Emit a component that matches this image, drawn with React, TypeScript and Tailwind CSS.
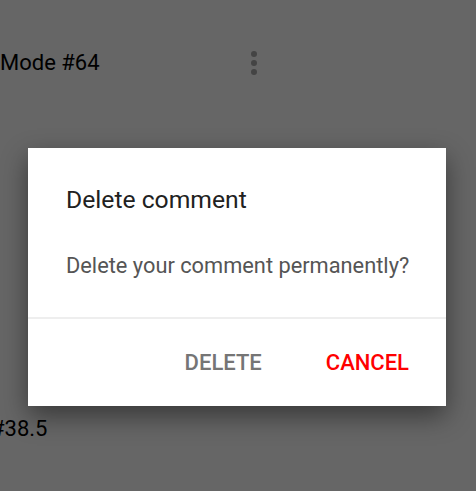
export default function App() {
  return (
    <div className="relative w-[476px] h-[491px] bg-[#666666] overflow-hidden" style={{ fontFamily: "Roboto, sans-serif" }}>
      <div className="flex items-center justify-between w-[270px] h-[40px] mt-[43px]">
        <span className="text-[22px] text-black leading-none">Mode #64</span>
        <div className="flex flex-col gap-[3px] mr-[13px]">
          <span className="block w-[6px] h-[6px] rounded-full bg-[#444444]" />
          <span className="block w-[6px] h-[6px] rounded-full bg-[#444444]" />
          <span className="block w-[6px] h-[6px] rounded-full bg-[#444444]" />
        </div>
      </div>
      <div className="absolute left-[-9px] top-[418px] text-[22px] text-black leading-none">#38.5</div>
      <div className="absolute left-[28px] top-[148px] w-[418px] h-[258px] bg-white shadow-[0_10px_25px_rgba(0,0,0,0.45)] flex flex-col">
        <div className="px-[38px] pt-[36px] text-[24.7px] text-[#212121] leading-[32px]">Delete comment</div>
        <div className="px-[38px] pt-[35px] text-[21.8px] text-[#555555] leading-[30px] whitespace-nowrap">Delete your comment permanently?</div>
        <div className="mt-[36px] h-[2px] bg-[#eeeeee]" />
        <div className="flex justify-end items-center gap-[64px] pr-[37px] flex-1 text-[22px] font-medium">
          <span className="text-[#757575]">DELETE</span>
          <span className="text-[#ff0000]">CANCEL</span>
        </div>
      </div>
    </div>
  );
}
